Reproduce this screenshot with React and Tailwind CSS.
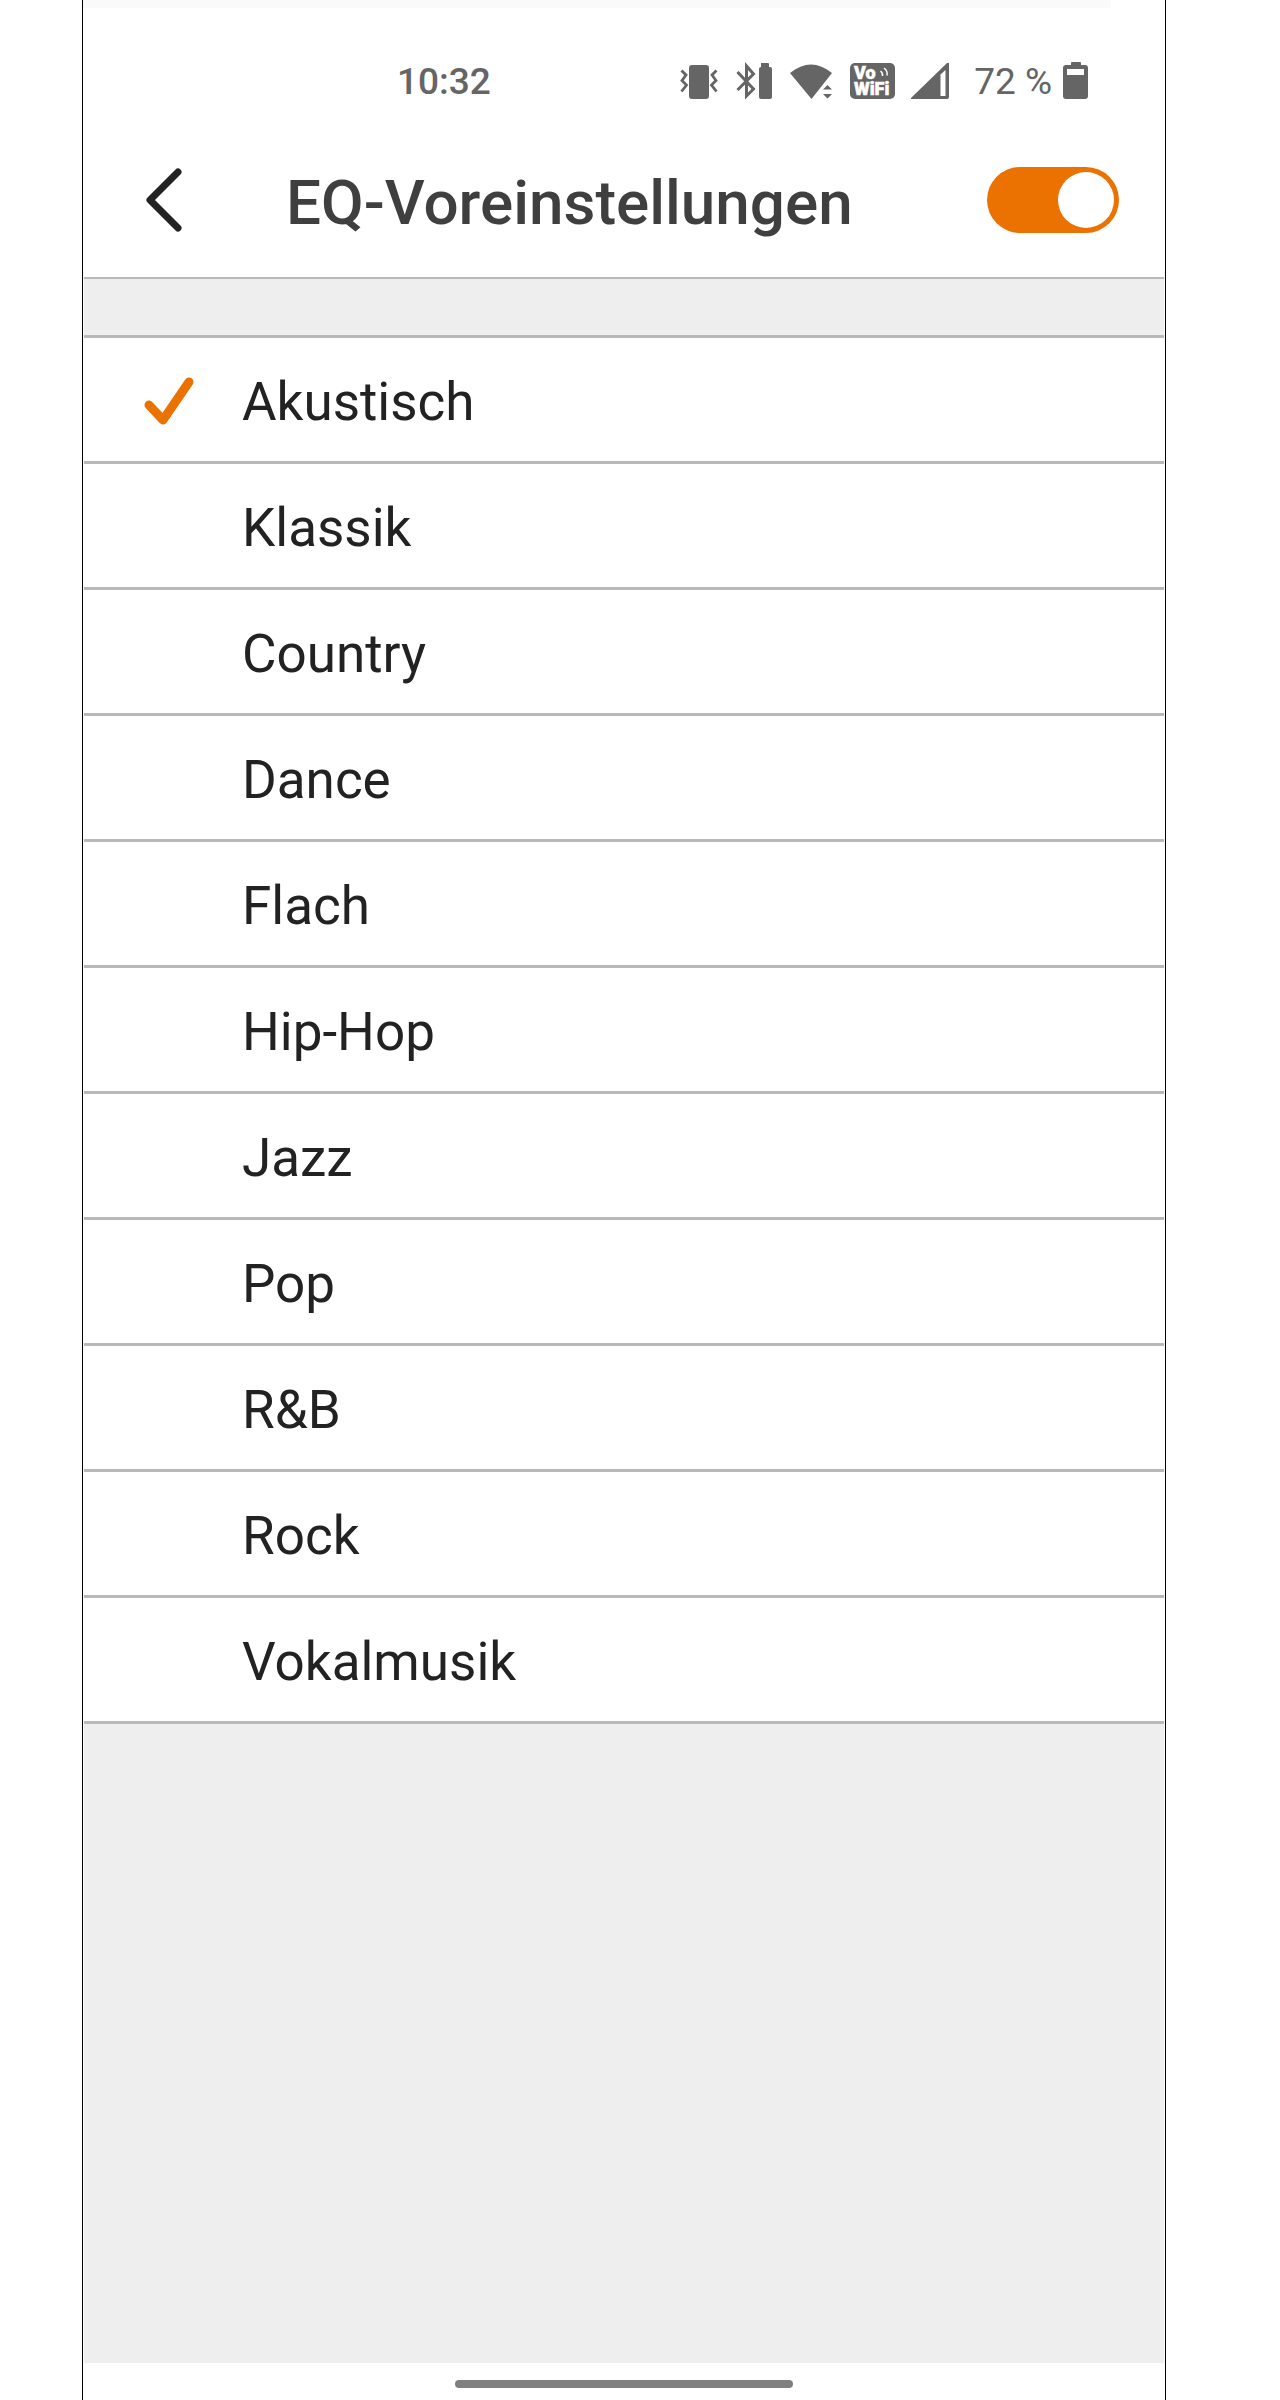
import { useState } from "react";

const presets = [
  "Akustisch",
  "Klassik",
  "Country",
  "Dance",
  "Flach",
  "Hip-Hop",
  "Jazz",
  "Pop",
  "R&B",
  "Rock",
  "Vokalmusik",
];

function VibrateIcon() {
  return (
    <svg width="38" height="38" viewBox="0 0 38 38" fill="none" aria-hidden="true">
      <rect x="9" y="3" width="20" height="34" rx="3" fill="currentColor" />
      <path d="M1.500 8.500l4.500 4.500-4 5.500 4.500 4.500-5 6.500M36.500 8.500l-4.500 4.500 4 5.500-4.500 4.500 5 6.500" stroke="currentColor" strokeWidth="2.800" />
    </svg>
  );
}

function BluetoothIcon() {
  return (
    <svg width="36" height="38" viewBox="0 0 36 38" fill="none" aria-hidden="true">
      <path d="M1.500 10L17.500 27L10.500 34V4L17.500 12L1.500 28" stroke="currentColor" strokeWidth="3" />
      <path d="M25 1h7a1 1 0 0 1 1 1v3h1a2 2 0 0 1 2 2v28a2 2 0 0 1-2 2H25a2 2 0 0 1-2-2V7a2 2 0 0 1 2-2V1z" fill="currentColor" />
    </svg>
  );
}

function WifiIcon() {
  return (
    <svg width="42" height="38" viewBox="0 0 42 38" fill="currentColor" aria-hidden="true">
      <path d="M0 11Q21-6 42 11L21.500 37z" />
      <path d="M33 27.500l4.500-4.500 4.500 4.500zM33 32h9l-4.500 4.500z" />
    </svg>
  );
}

function VoWifiIcon() {
  return (
    <svg width="45" height="38" viewBox="0 0 45 38" aria-label="VoWiFi" role="img">
      <rect x="0" y="1" width="45" height="36" rx="5" fill="currentColor" />
      <text fill="white" stroke="white" strokeWidth="0.500" fontFamily="Roboto, sans-serif" fontWeight="900" fontSize="18">
        <tspan x="4" y="17">Vo</tspan>
        <tspan x="4" y="33">WiFi</tspan>
      </text>
      <path d="M30.500 9q2.500 2 2 5M34 6q4 3 3 7.500" stroke="white" strokeWidth="1.500" fill="none" />
    </svg>
  );
}

function SignalIcon() {
  return (
    <svg width="38" height="38" viewBox="0 0 38 38" aria-hidden="true">
      <path d="M36 1q2-1 2 1v33a2 2 0 0 1-2 2H1q-2 0-.5-1.500z" fill="currentColor" />
      <path d="M29.500 12.500L34.500 8v26h-5z" fill="white" />
    </svg>
  );
}

function BatteryIcon() {
  return (
    <svg width="26" height="38" viewBox="0 0 26 38" aria-hidden="true">
      <path d="M9 0h8a1 1 0 0 1 1 1v2h4a3 3 0 0 1 3 3v28a3 3 0 0 1-3 3H3a3 3 0 0 1-3-3V6a3 3 0 0 1 3-3h5V1a1 1 0 0 1 1-1z" fill="currentColor" />
      <rect x="4" y="7" width="17" height="6" fill="white" />
    </svg>
  );
}

function StatusBar() {
  return (
    <div className="flex items-center justify-between pt-[52px] pr-[76px] pl-[314px] leading-[40px] text-[#656565]">
      <time className="pt-[2px] text-[37px] font-medium">10:32</time>
      <div className="flex items-center">
        <div className="flex items-center gap-[18px]">
          <VibrateIcon />
          <BluetoothIcon />
          <WifiIcon />
          <VoWifiIcon />
        </div>
        <div className="ml-4 flex items-center">
          <SignalIcon />
          <span className="mr-[11px] ml-[25px] pt-[2px] text-[37px]">72 %</span>
          <BatteryIcon />
        </div>
      </div>
    </div>
  );
}

function Header({ enabled, onToggle }) {
  return (
    <header className="flex items-center justify-between border-b-2 border-[#b9b9b9] pt-[61px] pr-[45px] pb-[40px] pl-[61px]">
      <div className="flex items-center">
        <button type="button" aria-label="Zurück" className="cursor-pointer text-[#222222]">
          <svg width="40" height="66" viewBox="0 0 40 66" fill="none" stroke="currentColor" strokeWidth="7" strokeLinecap="round" strokeLinejoin="round" aria-hidden="true">
            <path d="M33 5L5 33L33 61" />
          </svg>
        </button>
        <h1 id="eq-title" className="ml-[101px] pt-[6px] text-[62px] leading-[68px] font-medium text-[#3f3f3f]">
          EQ-Voreinstellungen
        </h1>
      </div>
      <label className="flex cursor-pointer">
        <input
          type="checkbox"
          role="switch"
          aria-labelledby="eq-title"
          checked={enabled}
          onChange={onToggle}
          className="peer sr-only"
        />
        <span className="flex h-[66px] w-[132px] justify-start rounded-full bg-[#b9b9b9] p-[5px] peer-checked:justify-end peer-checked:bg-[#eb7100]">
          <span className="h-14 w-14 rounded-full bg-white" />
        </span>
      </label>
    </header>
  );
}

function PresetRow({ name, checked, onSelect }) {
  return (
    <li className="border-b-3 border-[#b9b9b9] bg-white">
      <label className="flex h-[123px] cursor-pointer items-center pl-[57px] text-[53px] text-[#222222]">
        <input type="radio" name="preset" value={name} checked={checked} onChange={onSelect} className="peer sr-only" />
        <svg
          width="60"
          height="60"
          viewBox="0 0 60 60"
          fill="none"
          stroke="#eb7100"
          strokeWidth="9"
          strokeLinecap="round"
          strokeLinejoin="round"
          className="invisible peer-checked:visible"
          aria-hidden="true"
        >
          <path d="M8 35L22 50L48 12" />
        </svg>
        <span className="ml-[41px] pt-[6px]">{name}</span>
      </label>
    </li>
  );
}

export default function App() {
  const [enabled, setEnabled] = useState(true);
  const [selected, setSelected] = useState("Akustisch");

  return (
    <div className="min-h-screen bg-white pr-[114px] pl-[82px] font-['Roboto',sans-serif]">
      <div className="flex min-h-screen flex-col border-x border-black">
        <div className="mr-[54px] h-2 bg-[#fafafa]" />
        <StatusBar />
        <div className="mx-px flex grow flex-col">
          <Header enabled={enabled} onToggle={() => setEnabled(!enabled)} />
          <main className="grow bg-[#eeeeee] pt-14">
            <ul className="border-t-3 border-[#b9b9b9]" role="radiogroup" aria-labelledby="eq-title">
              {presets.map((name) => (
                <PresetRow key={name} name={name} checked={selected === name} onSelect={() => setSelected(name)} />
              ))}
            </ul>
          </main>
        </div>
        <footer className="flex justify-center pt-[17px] pb-3">
          <div className="h-2 w-[338px] rounded-full bg-[#808080]" />
        </footer>
      </div>
    </div>
  );
}
